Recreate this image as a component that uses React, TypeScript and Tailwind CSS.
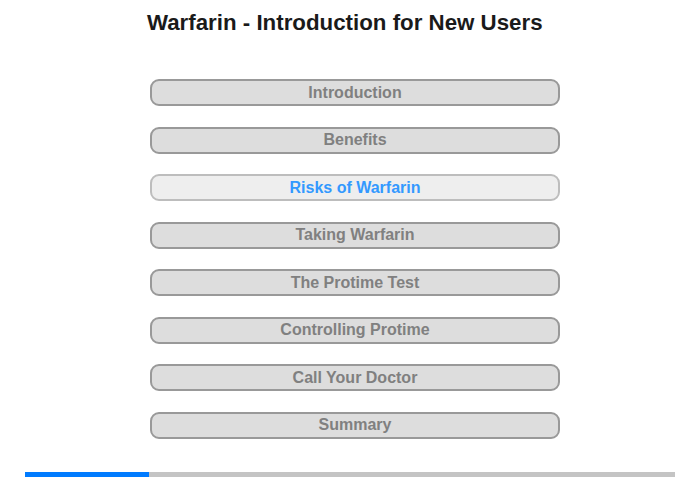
import React from "react";

const items = [
  "Introduction",
  "Benefits",
  "Risks of Warfarin",
  "Taking Warfarin",
  "The Protime Test",
  "Controlling Protime",
  "Call Your Doctor",
  "Summary",
];

export default function App() {
  return (
    <div
      className="w-[700px] h-[480px] bg-white flex flex-col"
      style={{ fontFamily: '"Liberation Sans", Arial, sans-serif' }}
    >
      <h1 className="pt-[11px] h-[79px] text-[22.3px] leading-[24px] font-bold text-[#1a1a1a] pl-[147px]">
        Warfarin - Introduction for New Users
      </h1>
      <div className="flex flex-col gap-[20.5px] pl-[150px]">
        {items.map((t, i) => {
          const active = i === 2;
          return (
            <div
              key={t}
              className={
                active
                  ? "w-[410px] h-[27px] rounded-[9px] border-2 border-[#bdbdbd] bg-[#eeeeee] flex items-center justify-center text-[16px] font-bold text-[#3399ff]"
                  : "w-[410px] h-[27px] rounded-[9px] border-2 border-[#999999] bg-[#dddddd] flex items-center justify-center text-[16px] font-bold text-[#808080]"
              }
            >
              {t}
            </div>
          );
        })}
      </div>
      <div className="mt-[33px] ml-[25px] w-[650px] h-[5px] bg-[#c4c4c4] flex">
        <div className="w-[124px] h-full bg-[#007bff]" />
      </div>
    </div>
  );
}
